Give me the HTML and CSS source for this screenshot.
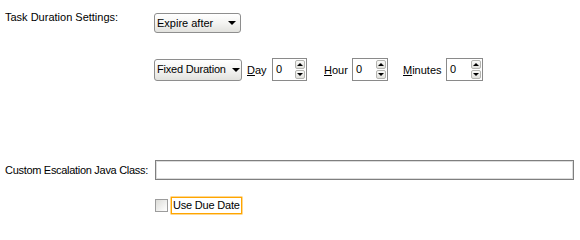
FILE: index.html
```
<!DOCTYPE html>
<html>
<head>
<meta charset="utf-8">
<link rel="stylesheet" href="styles.css">
</head>
<body>
<div class="form">
  <div class="row row-duration">
    <div class="label label-top">Task Duration Settings:</div>
    <div class="col">
      <div class="select select-expire"><span class="select-text">Expire after</span><span class="arrow"></span></div>
      <div class="fixed-row">
        <div class="select select-fixed"><span class="select-text">Fixed Duration</span><span class="arrow"></span></div>
        <span class="unit unit-day"><u>D</u>ay</span>
        <div class="spin spin-day"><span class="spin-value">0</span><span class="spin-btns"><span class="spin-btn"><span class="tri-up"></span></span><span class="spin-btn"><span class="tri-down"></span></span></span></div>
        <span class="unit unit-hour"><u>H</u>our</span>
        <div class="spin spin-hour"><span class="spin-value">0</span><span class="spin-btns"><span class="spin-btn"><span class="tri-up"></span></span><span class="spin-btn"><span class="tri-down"></span></span></span></div>
        <span class="unit unit-min"><u>M</u>inutes</span>
        <div class="spin spin-min"><span class="spin-value">0</span><span class="spin-btns"><span class="spin-btn"><span class="tri-up"></span></span><span class="spin-btn"><span class="tri-down"></span></span></span></div>
      </div>
    </div>
  </div>
  <div class="row row-class">
    <div class="label label-class">Custom Escalation Java Class:</div>
    <div class="text-input"></div>
  </div>
  <div class="row row-check">
    <div class="label"></div>
    <span class="checkbox"></span>
    <span class="check-label">Use Due Date</span>
  </div>
</div>
</body>
</html>
```
FILE: styles.css
```
html, body {
  margin: 0;
  padding: 0;
  background: #ffffff;
}
body {
  font-family: "Liberation Sans", Arial, sans-serif;
  font-size: 11px;
  color: #000000;
  width: 580px;
  height: 219px;
  overflow: hidden;
}
.form {
  padding: 11px 6px 0 5px;
}
.row {
  display: flex;
}
.label {
  width: 149px;
  flex: none;
  line-height: 13px;
  white-space: nowrap;
}
.row-duration {
  align-items: flex-start;
}
.col {
  display: flex;
  flex-direction: column;
  align-items: flex-start;
}
.select {
  box-sizing: border-box;
  display: flex;
  align-items: center;
  border: 1px solid #8e8e8e;
  border-radius: 3px;
  background: linear-gradient(#ffffff 0%, #f4f4f2 50%, #e2e2de 100%);
  position: relative;
}
.select-expire {
  margin-top: 2px;
  width: 87px;
  height: 20px;
}
.select-fixed {
  width: 88px;
  height: 22px;
}
.select-text {
  padding-left: 2px;
  line-height: 13px;
  white-space: nowrap;
}
.select-fixed .select-text {
  letter-spacing: -0.2px;
}
.arrow {
  position: absolute;
  right: 4px;
  top: 50%;
  margin-top: -2px;
  width: 0;
  height: 0;
  border-left: 4px solid transparent;
  border-right: 4px solid transparent;
  border-top: 4px solid #000;
}
.select-fixed .arrow {
  right: 1px;
}
.fixed-row {
  margin-top: 25px;
  display: flex;
  align-items: center;
  height: 23px;
}
.unit {
  flex: none;
  white-space: nowrap;
}
.unit-day {
  margin-left: 5px;
  width: 25px;
}
.unit-hour {
  margin-left: 17px;
  width: 28px;
}
.unit-min {
  margin-left: 15px;
  width: 43px;
}
.spin {
  box-sizing: border-box;
  height: 23px;
  border: 1px solid #8a8a8a;
  display: flex;
  background: #fff;
}
.spin-day { width: 35px; }
.spin-hour { width: 36px; }
.spin-min { width: 37px; }
.spin-value {
  flex: 1;
  padding-left: 3px;
  line-height: 21px;
}
.spin-btns {
  width: 10px;
  display: flex;
  flex-direction: column;
  padding: 1px 1px 1px 0;
  gap: 1px;
}
.spin-btn {
  flex: 1;
  box-sizing: border-box;
  border: 1px solid #b4b4b0;
  border-radius: 2px;
  background: linear-gradient(#fafaf8, #e0e0dc);
  display: flex;
  align-items: center;
  justify-content: center;
}
.tri-up {
  width: 0;
  height: 0;
  border-left: 3px solid transparent;
  border-right: 3px solid transparent;
  border-bottom: 3px solid #000;
}
.tri-down {
  width: 0;
  height: 0;
  border-left: 3px solid transparent;
  border-right: 3px solid transparent;
  border-top: 3px solid #000;
}
.row-class {
  margin-top: 79px;
  align-items: center;
}
.row-class .label {
  width: 150px;
}
.label-class {
  letter-spacing: -0.3px;
}
.text-input {
  box-sizing: border-box;
  flex: 1;
  height: 20px;
  border: 1px solid #7f7f7f;
  box-shadow: inset 0 0 0 1px #dcdcdc;
  background: #fff;
}
.row-check {
  margin-top: 17px;
  align-items: center;
}
.row-check .label {
  width: 150px;
}
.checkbox {
  box-sizing: border-box;
  width: 13px;
  height: 13px;
  border: 1px solid #9c9c9c;
  background: linear-gradient(135deg, #dcdcd8, #ffffff);
}
.check-label {
  box-sizing: border-box;
  margin-left: 3px;
  height: 17px;
  border: 1px solid #ffa500;
  box-shadow: 0 0 0 0.5px #ffb020;
  padding: 0 1px;
  line-height: 15px;
  white-space: nowrap;
  letter-spacing: -0.2px;
}
```
